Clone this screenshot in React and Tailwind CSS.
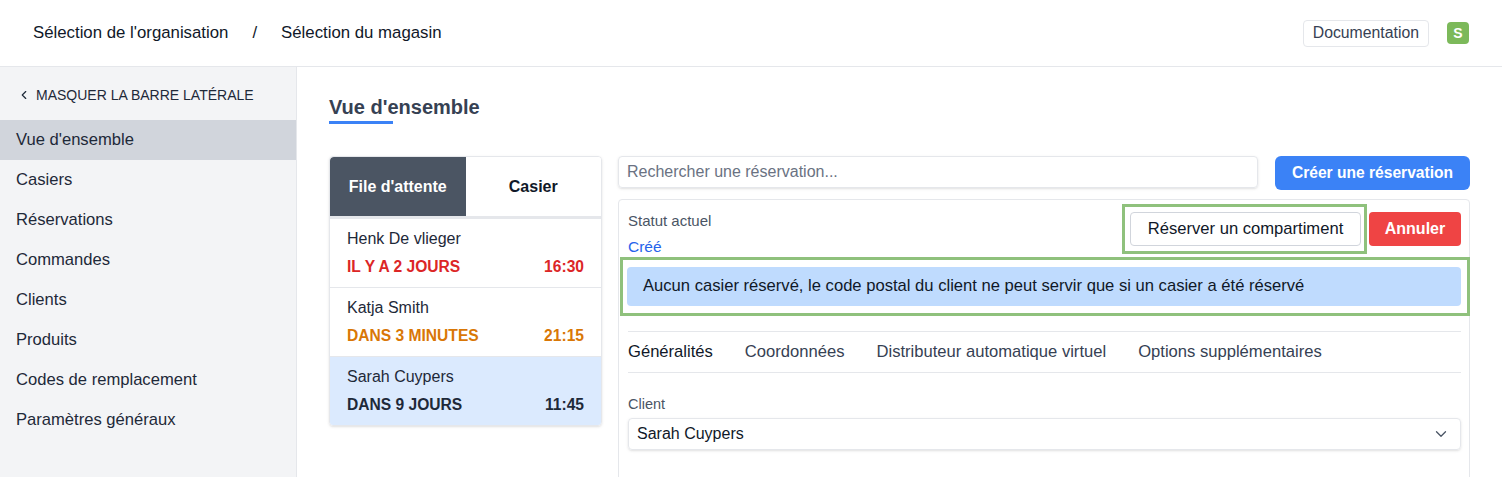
import { ChevronLeft, ChevronDown } from "lucide-react";

const navItems = [
  "Vue d'ensemble",
  "Casiers",
  "Réservations",
  "Commandes",
  "Clients",
  "Produits",
  "Codes de remplacement",
  "Paramètres généraux",
];

const queue = [
  { name: "Henk De vlieger", when: "IL Y A 2 JOURS", time: "16:30", tone: "text-[#dc2626]" },
  { name: "Katja Smith", when: "DANS 3 MINUTES", time: "21:15", tone: "text-[#d97706]" },
  { name: "Sarah Cuypers", when: "DANS 9 JOURS", time: "11:45", tone: "text-gray-800", selected: true },
];

const detailTabs = ["Généralités", "Coordonnées", "Distributeur automatique virtuel", "Options supplémentaires"];

const App = () => {
  return (
    <div
      className="min-h-screen bg-white text-gray-800"
      style={{ fontFamily: '"Liberation Sans", Arial, sans-serif' }}
    >
      {/* Header */}
      <header className="h-[67px] flex items-center justify-between px-[33px] border-b border-gray-200">
        <div className="flex items-center text-[16.8px] font-medium text-gray-900">
          <span>Sélection de l'organisation</span>
          <span className="mx-[24px]">/</span>
          <span>Sélection du magasin</span>
        </div>
        <div className="flex items-center">
          <button className="h-[27px] px-[9px] border border-gray-200 rounded-sm text-[15.8px] text-gray-700">
            Documentation
          </button>
          <div className="ml-[18px] w-[22px] h-[22px] rounded-sm bg-[#7cb95a] text-white text-sm font-semibold flex items-center justify-center">
            S
          </div>
        </div>
      </header>

      <div className="flex">
        {/* Sidebar */}
        <aside className="w-[297px] shrink-0 bg-gray-100 border-r border-gray-200 min-h-[410px]">
          <div className="h-[53px] flex items-center pl-[17px] pt-[3px] text-[14px] font-medium uppercase text-gray-800">
            <ChevronLeft size={14} strokeWidth={2} className="mr-[5px]" />
            <span>Masquer la barre latérale</span>
          </div>
          {navItems.map((item, i) => (
            <div
              key={item}
              className={`h-10 flex items-center px-4 pt-[1px] text-[16.6px] font-medium text-gray-800 ${
                i === 0 ? "bg-gray-300" : ""
              }`}
            >
              {item}
            </div>
          ))}
        </aside>

        {/* Main */}
        <main className="flex-1 px-8 pt-[26px]">
          <h2 className="text-xl leading-7 font-bold text-gray-700">Vue d'ensemble</h2>
          <div className="w-16 h-[3px] bg-[#3b82f6]" />

          <div className="flex gap-4 mt-8 items-start">
            {/* Queue panel */}
            <div className="w-[273px] shrink-0 border border-gray-200 rounded shadow-sm overflow-hidden">
              <div className="flex h-[59px]">
                <div className="flex-1 bg-[#4b5563] text-white font-bold text-base flex items-center justify-center rounded-tl">
                  File d'attente
                </div>
                <div className="flex-1 bg-white text-gray-900 font-bold text-base flex items-center justify-center">
                  Casier
                </div>
              </div>
              <div className="h-[3px] bg-gray-200" />
              {queue.map((q, i) => (
                <div
                  key={q.name}
                  className={`px-[17px] py-2 ${q.selected ? "bg-[#dbeafe]" : "bg-white"} ${
                    i > 0 ? "border-t border-gray-200" : ""
                  }`}
                >
                  <div className="text-base leading-6 text-gray-800">{q.name}</div>
                  <div className={`mt-1 flex justify-between text-[15.6px] leading-6 font-semibold ${q.tone}`}>
                    <span>{q.when}</span>
                    <span>{q.time}</span>
                  </div>
                </div>
              ))}
            </div>

            {/* Detail panel */}
            <div className="flex-1 min-w-0">
              <div className="flex items-start">
                <div className="flex-1 h-[32px] border border-gray-200 rounded shadow-sm flex items-center px-2 text-base text-gray-500">
                  Rechercher une réservation...
                </div>
                <button className="ml-[17px] w-[195px] h-[34px] rounded-md bg-[#3b82f6] text-white text-[15.6px] font-semibold">
                  Créer une réservation
                </button>
              </div>

              <div className="mt-[9px] border border-gray-200 rounded pt-1 pl-[9px] pr-2 pb-10">
                <div className="h-[50px] flex justify-between items-start">
                  <div>
                    <div className="mt-[7px] text-[15px] leading-5 text-gray-600">Statut actuel</div>
                    <div className="mt-[6px] text-[15.5px] leading-5 text-[#2563eb]">Créé</div>
                  </div>
                  <div className="flex items-start">
                    <div className="border-[3px] border-[#8fc17c] p-[5px] pr-[3px]">
                      <button className="w-[231px] h-[34px] bg-white border border-gray-300 rounded text-[16.6px] text-gray-900">
                        Réserver un compartiment
                      </button>
                    </div>
                    <button className="ml-[2px] mt-2 w-[92px] h-[34px] bg-[#ef4444] text-white rounded text-base font-semibold">
                      Annuler
                    </button>
                  </div>
                </div>

                <div className="mt-[3px] -ml-[8px] -mr-[9px] border-[3px] border-[#8fc17c] pt-[7px] pb-[7px] pl-[4px] pr-[6px]">
                  <div className="h-[39px] rounded bg-[#bfdbfe] flex items-center px-4 text-[16.6px] font-medium text-gray-900">
                    Aucun casier réservé, le code postal du client ne peut servir que si un casier a été réservé
                  </div>
                </div>

                <div className="mt-[15px] border-t border-b border-gray-200 py-2 flex gap-8 text-[16.6px] leading-6">
                  {detailTabs.map((t, i) => (
                    <span key={t} className={i === 0 ? "font-medium text-gray-900" : "text-gray-700"}>
                      {t}
                    </span>
                  ))}
                </div>

                <div className="mt-[21px] text-[14.5px] leading-5 text-gray-600">Client</div>
                <div className="mt-1 h-[32px] border border-gray-200 rounded shadow-sm flex items-center justify-between pl-2 pr-[10px] text-base text-gray-900">
                  <span>Sarah Cuypers</span>
                  <ChevronDown size={18} strokeWidth={1.75} className="text-gray-600" />
                </div>
              </div>
            </div>
          </div>
        </main>
      </div>
    </div>
  );
};

export default App;
